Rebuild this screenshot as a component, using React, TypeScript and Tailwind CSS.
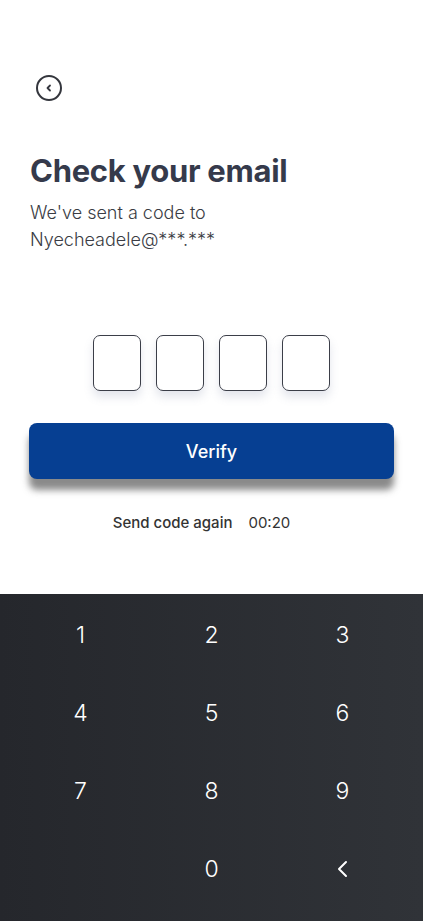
import React from "react";

export default function App() {
  const keys = ["1", "2", "3", "4", "5", "6", "7", "8", "9", "", "0", "<"];
  return (
    <div className="w-[423px] h-[921px] bg-white flex flex-col overflow-hidden" style={{ fontFamily: "Inter, 'Noto Sans', sans-serif" }}>
      <div className="flex-1 flex flex-col px-[30px]">
        <div className="pt-[75px]">
          <div className="w-[26px] h-[26px] ml-[6px] rounded-full border-2 border-[#34363d] flex items-center justify-center">
            <svg width="8" height="8" viewBox="0 0 8 8" fill="none">
              <path d="M5 1.5L2.5 4L5 6.5" stroke="#34363d" strokeWidth="1.8" strokeLinecap="round" strokeLinejoin="round" />
            </svg>
          </div>
        </div>
        <h1 className="mt-[50px] text-[31px] leading-[40px] font-bold text-[#353a4b] tracking-[-0.3px]">Check your email</h1>
        <p className="mt-[8px] text-[18px] leading-[27px] text-[#3a3c44] font-light">
          We've sent a code to
          <br />
          Nyecheadele@***.***
        </p>
        <div className="mt-[82px] flex justify-center gap-[15px]">
          {[0, 1, 2, 3].map((i) => (
            <div key={i} className="w-[48px] h-[56px] rounded-[7px] border border-[#3b3e48] bg-white shadow-[0_6px_10px_rgba(100,110,150,0.18)]" />
          ))}
        </div>
        <button className="mt-[32px] -mx-[1px] h-[56px] rounded-[8px] bg-[#063f92] text-white text-[18px] font-medium shadow-[0_11px_7px_rgba(60,60,60,0.6)]">
          Verify
        </button>
        <div className="mt-[33px] flex justify-center gap-[16px] text-[15px] text-[#333] pr-[20px]">
          <span className="font-medium">Send code again</span>
          <span>00:20</span>
        </div>
      </div>
      <div className="h-[327px] bg-gradient-to-r from-[#25272c] to-[#303338] grid grid-cols-3 grid-rows-[repeat(4,78px)] pt-[2px] px-[15px]">
        {keys.map((k, i) => (
          <div key={i} className="flex items-center justify-center text-white text-[23px] font-light">
            {k === "<" ? (
              <svg width="14" height="18" viewBox="0 0 14 18" fill="none">
                <path d="M10 2L3 9L10 16" stroke="white" strokeWidth="2" strokeLinecap="round" strokeLinejoin="round" />
              </svg>
            ) : (
              k
            )}
          </div>
        ))}
      </div>
    </div>
  );
}
